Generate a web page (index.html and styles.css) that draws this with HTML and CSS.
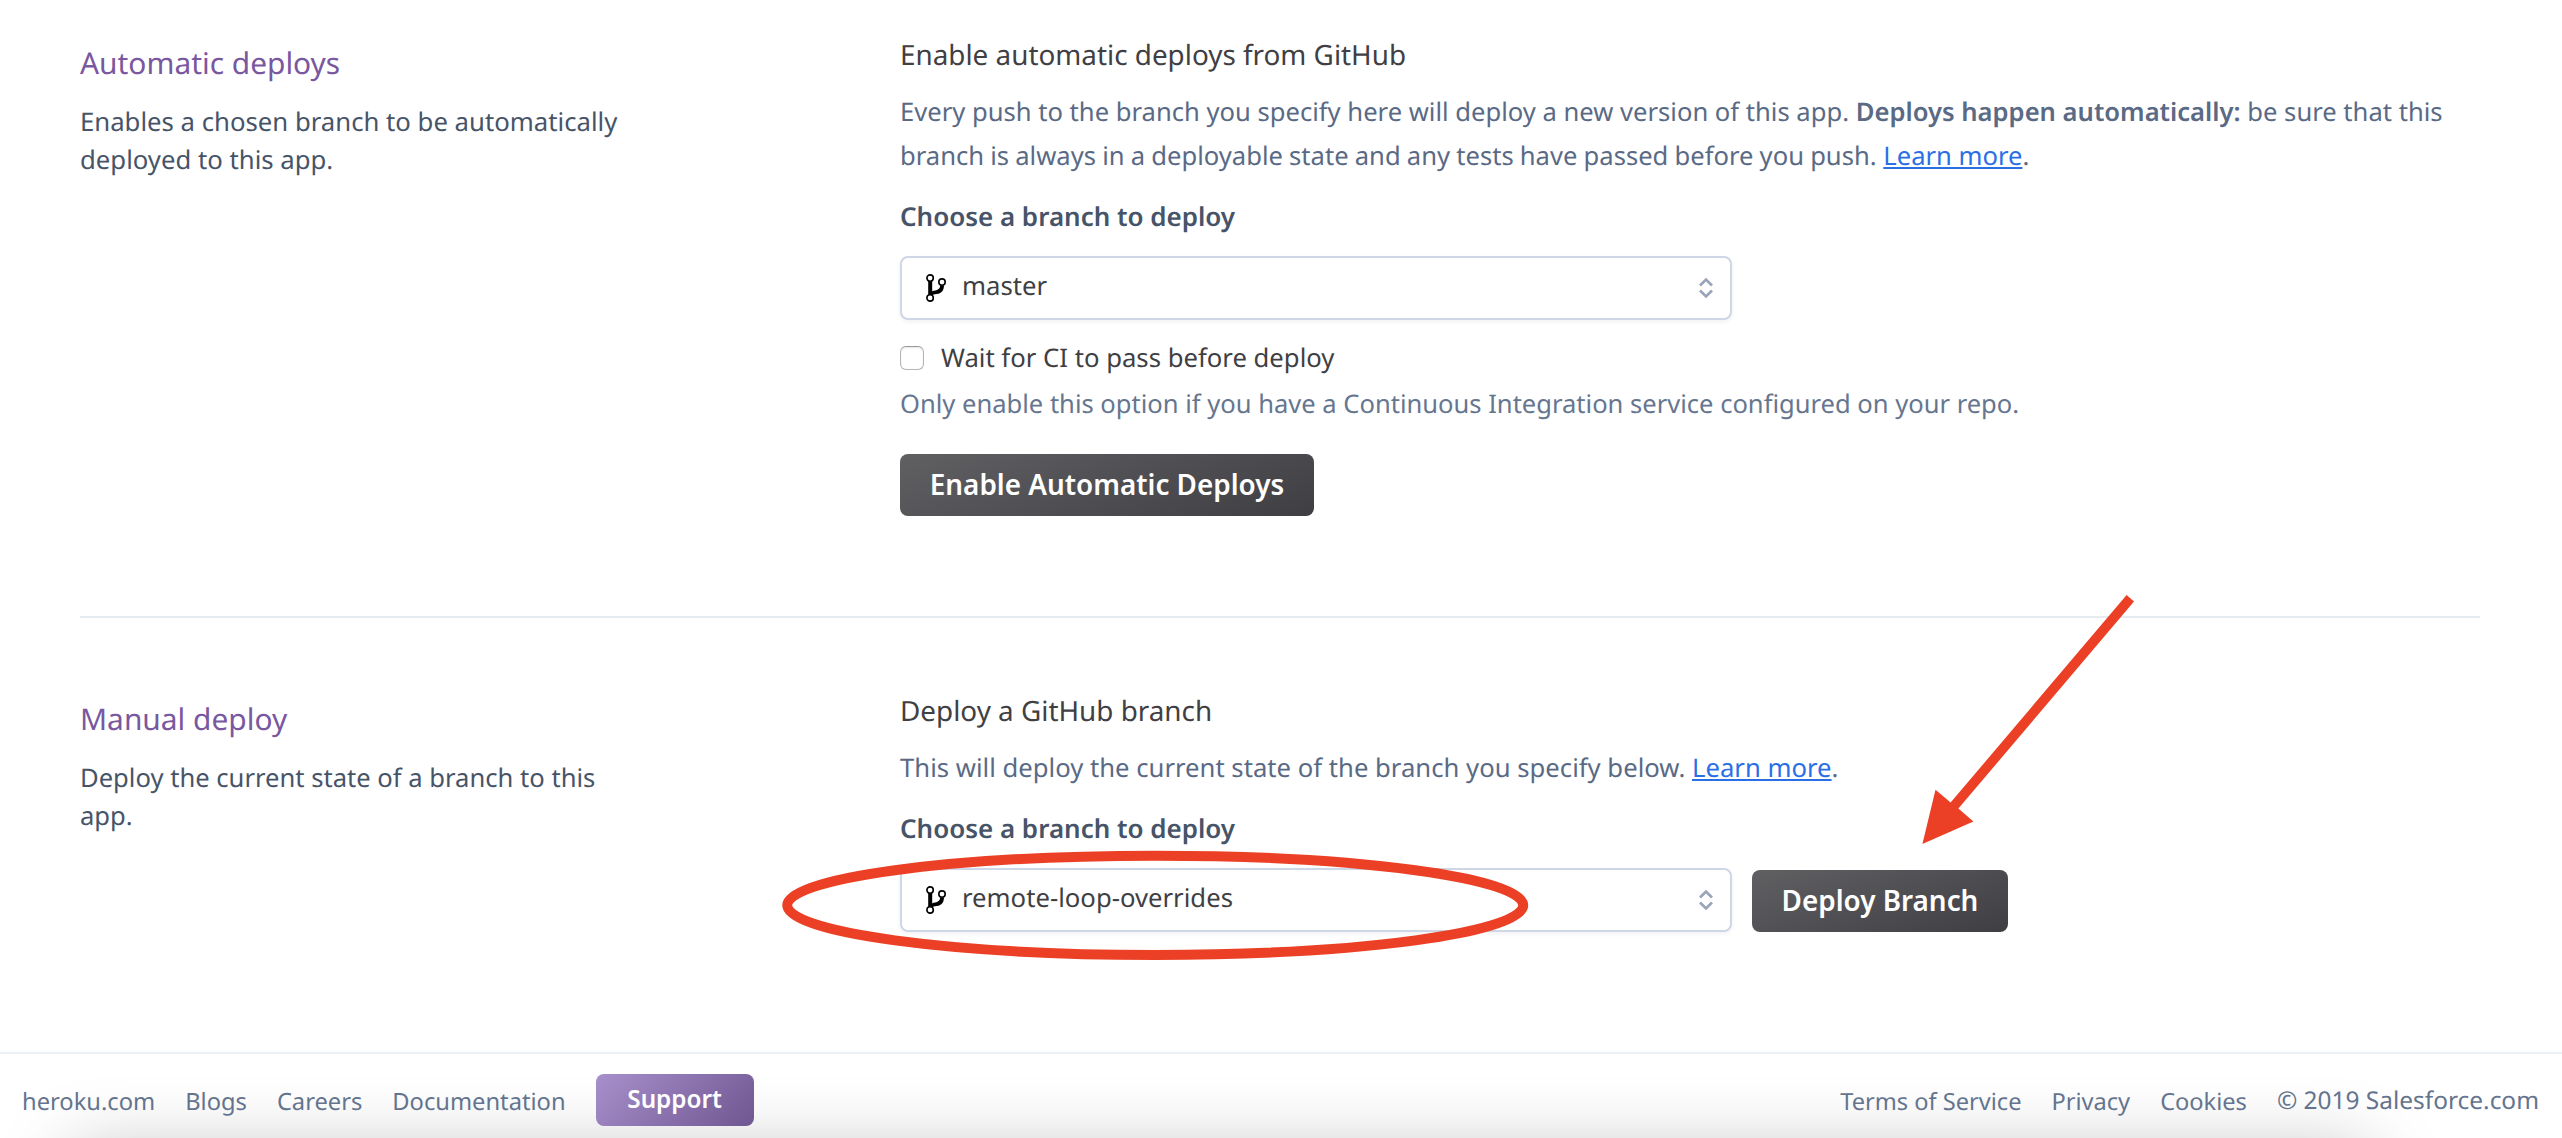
FILE: index.html
```
<!DOCTYPE html>
<html lang="en">
<head>
<meta charset="utf-8">
<title>Deploy</title>
<link rel="stylesheet" href="styles.css">
</head>
<body>
<svg class="defs" aria-hidden="true">
  <symbol id="branch" viewBox="0 0 20 28">
    <path d="M2.2 7H6.2V17.4C7.4 16 13.8 17.6 14.2 11.6H18C17.9 18.6 13.6 20 9 20.2 7.4 20.4 6.4 20.8 6.2 21.6H2.2Z" fill="#000"/>
    <g fill="#fff" stroke="#000" stroke-width="1.6">
      <circle cx="4.1" cy="4.1" r="3.2"/><circle cx="16" cy="8.1" r="3.2"/><circle cx="4.1" cy="23.9" r="3.2"/>
    </g>
  </symbol>
  <symbol id="updown" viewBox="0 0 16 22">
    <path d="M2 8.5 8 2.6l6 5.9M2 13.5l6 5.9 6-5.9" fill="none" stroke="#9aa5ba" stroke-width="2.8"/>
  </symbol>
</svg>
<main class="page">
  <section class="section">
    <div class="side">
      <h2 class="side-title">Automatic deploys</h2>
      <p class="side-text">Enables a chosen branch to be automatically<br>deployed to this app.</p>
    </div>
    <div class="main">
      <h3 class="heading">Enable automatic deploys from GitHub</h3>
      <p class="text">Every push to the branch you specify here will deploy a new version of this app. <strong>Deploys happen automatically:</strong> be sure that this<br><span class="tight">branch is always in a deployable state and any tests have passed before you push.</span> <a class="link" href="#">Learn more</a>.</p>
      <div class="label">Choose a branch to deploy</div>
      <div class="select">
        <svg class="branch-icon"><use href="#branch"/></svg>
        <span class="value">master</span>
        <svg class="updown-icon"><use href="#updown"/></svg>
      </div>
      <label class="check"><span class="box"></span>Wait for CI to pass before deploy</label>
      <p class="hint">Only enable this option if you have a Continuous Integration service configured on your repo.</p>
      <button class="btn btn-enable">Enable Automatic Deploys</button>
    </div>
  </section>
  <section class="section section-manual">
    <div class="side">
      <h2 class="side-title">Manual deploy</h2>
      <p class="side-text">Deploy the current state of a branch to this<br>app.</p>
    </div>
    <div class="main">
      <h3 class="heading">Deploy a GitHub branch</h3>
      <p class="text">This will deploy the current state of the branch you specify below. <a class="link" href="#">Learn more</a>.</p>
      <div class="label">Choose a branch to deploy</div>
      <div class="deploy-row">
        <div class="select">
          <svg class="branch-icon"><use href="#branch"/></svg>
          <span class="value">remote-loop-overrides</span>
          <svg class="updown-icon"><use href="#updown"/></svg>
        </div>
        <button class="btn btn-deploy">Deploy Branch</button>
      </div>
    </div>
  </section>
</main>
<footer class="footer">
  <nav class="links">
    <a>heroku.com</a><a>Blogs</a><a>Careers</a><a>Documentation</a>
    <button class="support">Support</button>
  </nav>
  <nav class="links legal">
    <a>Terms of Service</a><a>Privacy</a><a>Cookies</a><a class="copy">© 2019 Salesforce.com</a>
  </nav>
</footer>
<svg class="annotations" viewBox="0 0 2562 1138">
  <ellipse cx="1155.2" cy="905.3" rx="368" ry="49.6" fill="none" stroke="#ec4026" stroke-width="10"/>
  <path d="M1922.4 844 1935.5 789.8 1950.6 802.6 2126.6 595 2134 601.5 1958.4 808.6 1973.4 821.6Z" fill="#ec4026"/>
</svg>
</body>
</html>
```
FILE: styles.css
```
* { box-sizing: border-box; }

body {
  position: relative;
  width: 2562px;
  height: 1138px;
  margin: 0;
  overflow: hidden;
  background: #fff;
  color: #3f3f44;
  font: 25.7px/40px "Noto Sans", "Open Sans", sans-serif;
  text-rendering: geometricPrecision;
}

h2, h3, p { margin: 0; font-weight: 400; }
button { border: 0; font-family: inherit; white-space: nowrap; }
.defs { position: absolute; width: 0; height: 0; }

.page { padding: 0 82px 0 80px; }
.section {
  display: grid;
  grid-template-columns: 820px 1fr;
  height: 616px;
  padding-top: 35px;
}
.section-manual {
  height: 436px;
  padding-top: 73px;
  border-top: 2px solid #e6ebf0;
}

.side { padding-top: 9px; }
.side-title { color: #79589f; font-size: 29.9px; line-height: 38px; }
.side-text { margin-top: 21px; color: #475468; font-size: 25.72px; line-height: 38px; }
.section-manual .side-text { font-size: 25.6px; }

.heading { font-size: 27.85px; line-height: 40px; }
.text {
  margin-top: 15px;
  color: #5a6a85;
  font-size: 25.6px;
  line-height: 44px;
  white-space: nowrap;
}
.text strong { font-weight: 600; }
.tight { word-spacing: -.5px; }
.section-manual .text { font-size: 25.68px; }
.link {
  color: #2a6fe4;
  text-decoration-thickness: 2px;
  text-underline-offset: 2px;
  text-decoration-skip-ink: none;
}
.label {
  margin: 18px 0 20px;
  color: #475468;
  font-size: 25.98px;
  font-weight: 600;
}

.select {
  display: flex;
  align-items: center;
  width: 832px;
  height: 64px;
  padding: 0 16px 0 24px;
  border: 2px solid #cfd7e6;
  border-radius: 8px;
  background: #fff;
  box-shadow: 0 2px 4px rgba(60, 70, 90, .07);
}
.branch-icon { width: 20px; height: 28px; }
.value { flex: 1; margin-left: 16px; padding-bottom: 4px; }
.updown-icon { width: 16px; height: 22px; }

.check { display: flex; align-items: center; margin-top: 18px; }
.box {
  width: 24px;
  height: 24px;
  margin-right: 17px;
  border: 1.5px solid #b4b4b4;
  border-top-color: #999;
  border-radius: 6px;
  box-shadow: inset 0 1px 2px rgba(0, 0, 0, .1);
}
.hint { margin-top: 6px; color: #66768f; font-size: 25.55px; }

.btn {
  height: 62px;
  padding: 0 0 3px;
  border-radius: 8px;
  background: linear-gradient(160deg, #606063, #3f3e43);
  color: #fff;
  font-size: 27.85px;
  font-weight: 600;
  text-align: center;
}
.btn-enable { display: block; width: 414px; margin-top: 30px; }
.btn-deploy { width: 256px; }
.deploy-row { display: flex; align-items: flex-end; gap: 20px; }

.footer {
  position: relative;
  display: flex;
  justify-content: space-between;
  height: 86px;
  padding: 20px 23px 12px 22px;
  overflow: hidden;
  border-top: 2px solid #ecf1f6;
  color: #64748e;
  font-size: 23.7px;
}
/* Soft shade rising from the bottom edge */
.footer::before {
  content: "";
  position: absolute;
  top: 108px;
  left: 80px;
  width: 2280px;
  height: 120px;
  box-shadow: 0 0 76px 8px rgba(0, 0, 0, .27);
}
.links { position: relative; display: flex; align-items: center; gap: 30px; }
.links a { padding-top: 1px; }
.support {
  width: 158px;
  height: 52px;
  padding: 0 0 3px;
  border-radius: 8px;
  background: linear-gradient(135deg, #a890cc, #6f5691);
  color: #fff;
  font-size: 24.28px;
  font-weight: 600;
}
.legal { font-size: 23.6px; }
.copy { font-size: 24.45px; }

.annotations {
  position: absolute;
  top: 0;
  left: 0;
  width: 2562px;
  height: 1138px;
  pointer-events: none;
}
```
